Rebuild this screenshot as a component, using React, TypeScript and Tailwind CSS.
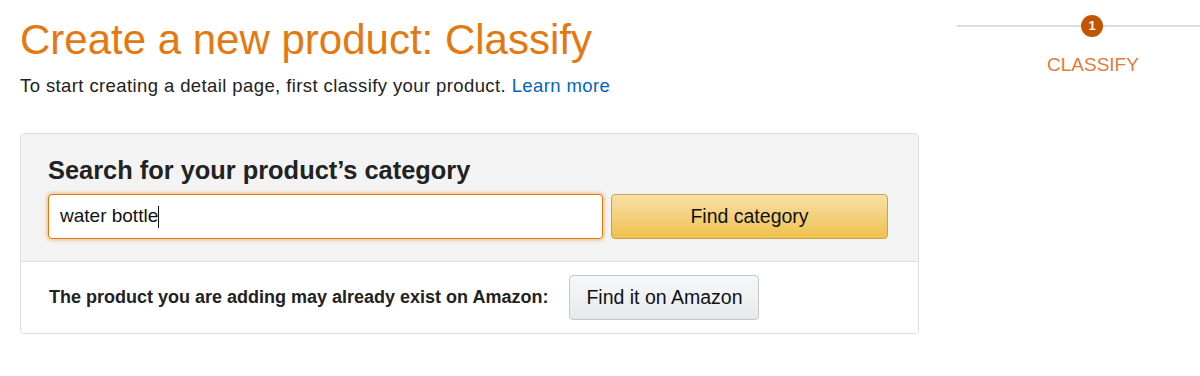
export default function App() {
  return (
    <div className="w-[1200px] h-[376px] bg-white flex font-['Liberation_Sans',Arial,sans-serif] text-[#111]">
      {/* Left: classify form */}
      <div className="w-[957px] pl-[20px] pt-[16px]">
        <h1 className="text-[42px] leading-[48px] text-[#e47911]">Create a new product: Classify</h1>
        <p className="mt-[11px] text-[18.5px] leading-[22px] tracking-[0.4px] text-[#222]">
          To start creating a detail page, first classify your product.{" "}
          <a className="text-[#0066c0]">Learn more</a>
        </p>

        <div className="mt-[36px] w-[899px] border border-[#ddd] rounded-[4px] overflow-hidden">
          <div className="bg-[#f3f3f3] border-b border-[#ddd] pl-[27px] pr-[30px] pt-[22px] pb-[22px]">
            <h2 className="text-[25.4px] leading-[28px] font-bold text-[#222]">Search for your product’s category</h2>
            <div className="mt-[10px] flex gap-[8px]">
              <div className="flex-1 h-[45px] bg-white border border-[#e77600] rounded-[4px] shadow-[0_0_3px_2px_rgba(228,121,17,0.3)] flex items-center px-[11px]">
                <span className="text-[19px] text-[#111]">water bottle</span>
                <span className="w-[1px] h-[22px] bg-[#111]" />
              </div>
              <button className="w-[277px] h-[45px] rounded-[4px] border border-[#c9a34a] bg-gradient-to-b from-[#f7dfa5] to-[#f0c14b] text-[19.5px] text-[#111]">
                Find category
              </button>
            </div>
          </div>
          <div className="bg-white h-[71px] pl-[28px] flex items-center">
            <span className="text-[18px] font-bold text-[#222]">The product you are adding may already exist on Amazon:</span>
            <button className="ml-[21px] w-[190px] h-[45px] rounded-[4px] border border-[#c4c7cc] bg-gradient-to-b from-[#f7f8fa] to-[#e7e9ec] text-[19.5px] text-[#111]">
              Find it on Amazon
            </button>
          </div>
        </div>
      </div>

      {/* Right: step indicator */}
      <div className="flex-1 pt-[15px]">
        <div className="relative h-[22px] flex items-center">
          <div className="w-full h-[2px] bg-[#ddd]" />
          <div className="absolute left-[124px] top-0 w-[22px] h-[22px] rounded-full bg-[#c45500] text-white text-[13px] font-bold flex items-center justify-center">
            1
          </div>
        </div>
        <div className="mt-[17px] ml-[90px] text-[19px] leading-[22px] text-[#e07b39]">CLASSIFY</div>
      </div>
    </div>
  );
}
